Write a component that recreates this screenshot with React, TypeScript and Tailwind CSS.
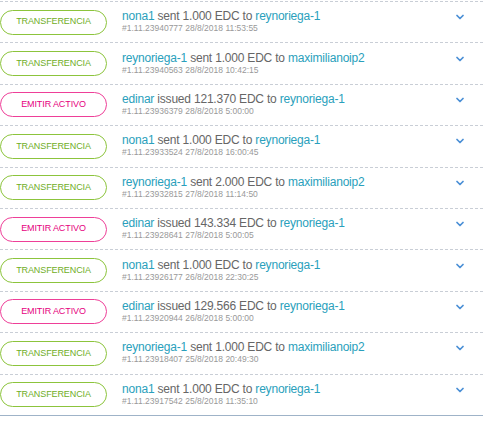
import { ChevronDown } from "lucide-react";

type Op = {
  kind: "transfer" | "issue";
  from: string;
  amount: string;
  to: string;
  id: string;
  date: string;
};

const ops: Op[] = [
  { kind: "transfer", from: "nona1", amount: "1.000", to: "reynoriega-1", id: "#1.11.23940777", date: "28/8/2018 11:53:55" },
  { kind: "transfer", from: "reynoriega-1", amount: "1.000", to: "maximilianoip2", id: "#1.11.23940563", date: "28/8/2018 10:42:15" },
  { kind: "issue", from: "edinar", amount: "121.370", to: "reynoriega-1", id: "#1.11.23936379", date: "28/8/2018 5:00:00" },
  { kind: "transfer", from: "nona1", amount: "1.000", to: "reynoriega-1", id: "#1.11.23933524", date: "27/8/2018 16:00:45" },
  { kind: "transfer", from: "reynoriega-1", amount: "2.000", to: "maximilianoip2", id: "#1.11.23932815", date: "27/8/2018 11:14:50" },
  { kind: "issue", from: "edinar", amount: "143.334", to: "reynoriega-1", id: "#1.11.23928641", date: "27/8/2018 5:00:05" },
  { kind: "transfer", from: "nona1", amount: "1.000", to: "reynoriega-1", id: "#1.11.23926177", date: "26/8/2018 22:30:25" },
  { kind: "issue", from: "edinar", amount: "129.566", to: "reynoriega-1", id: "#1.11.23920944", date: "26/8/2018 5:00:00" },
  { kind: "transfer", from: "reynoriega-1", amount: "1.000", to: "maximilianoip2", id: "#1.11.23918407", date: "25/8/2018 20:49:30" },
  { kind: "transfer", from: "nona1", amount: "1.000", to: "reynoriega-1", id: "#1.11.23917542", date: "25/8/2018 11:35:10" },
];

function Badge({ kind }: { kind: Op["kind"] }) {
  const isTransfer = kind === "transfer";
  return (
    <div
      className={`w-[107px] h-[25px] shrink-0 rounded-full border flex items-center justify-center text-[9px] tracking-[-0.1px] ${
        isTransfer
          ? "border-[#8cc43c] text-[#6fae1f]"
          : "border-[#ee3f98] text-[#e6007e]"
      }`}
    >
      {isTransfer ? "TRANSFERENCIA" : "EMITIR ACTIVO"}
    </div>
  );
}

export default function App() {
  return (
    <div
      className="w-[483px] h-[423px] bg-white overflow-hidden"
      style={{ fontFamily: '"Liberation Sans", Arial, sans-serif' }}
    >
      <div className="pt-px">
        <div className="border-b border-[#9fb3c8]">
          {ops.map((op) => (
            <div
              key={op.id}
              className="h-[41.4px] flex items-center border-t border-dashed border-[#c9ced6]"
            >
              <Badge kind={op.kind} />
              <div className="ml-[15px] flex-1 -mt-[2px]">
                <div className="text-[12px] leading-[14px] text-[#666] tracking-[-0.2px]">
                  <span className="text-[#2a9fbc]">{op.from}</span>{" "}
                  {op.kind === "transfer" ? "sent" : "issued"} {op.amount} EDC to{" "}
                  <span className="text-[#2a9fbc]">{op.to}</span>
                </div>
                <div className="text-[8.5px] leading-[10px] text-[#999]">
                  {op.id} {op.date}
                </div>
              </div>
              <ChevronDown
                className="w-[12px] h-[12px] text-[#4a8fd6] mr-[17px] -mt-[10px]"
                strokeWidth={3.5}
              />
            </div>
          ))}
        </div>
      </div>
    </div>
  );
}
